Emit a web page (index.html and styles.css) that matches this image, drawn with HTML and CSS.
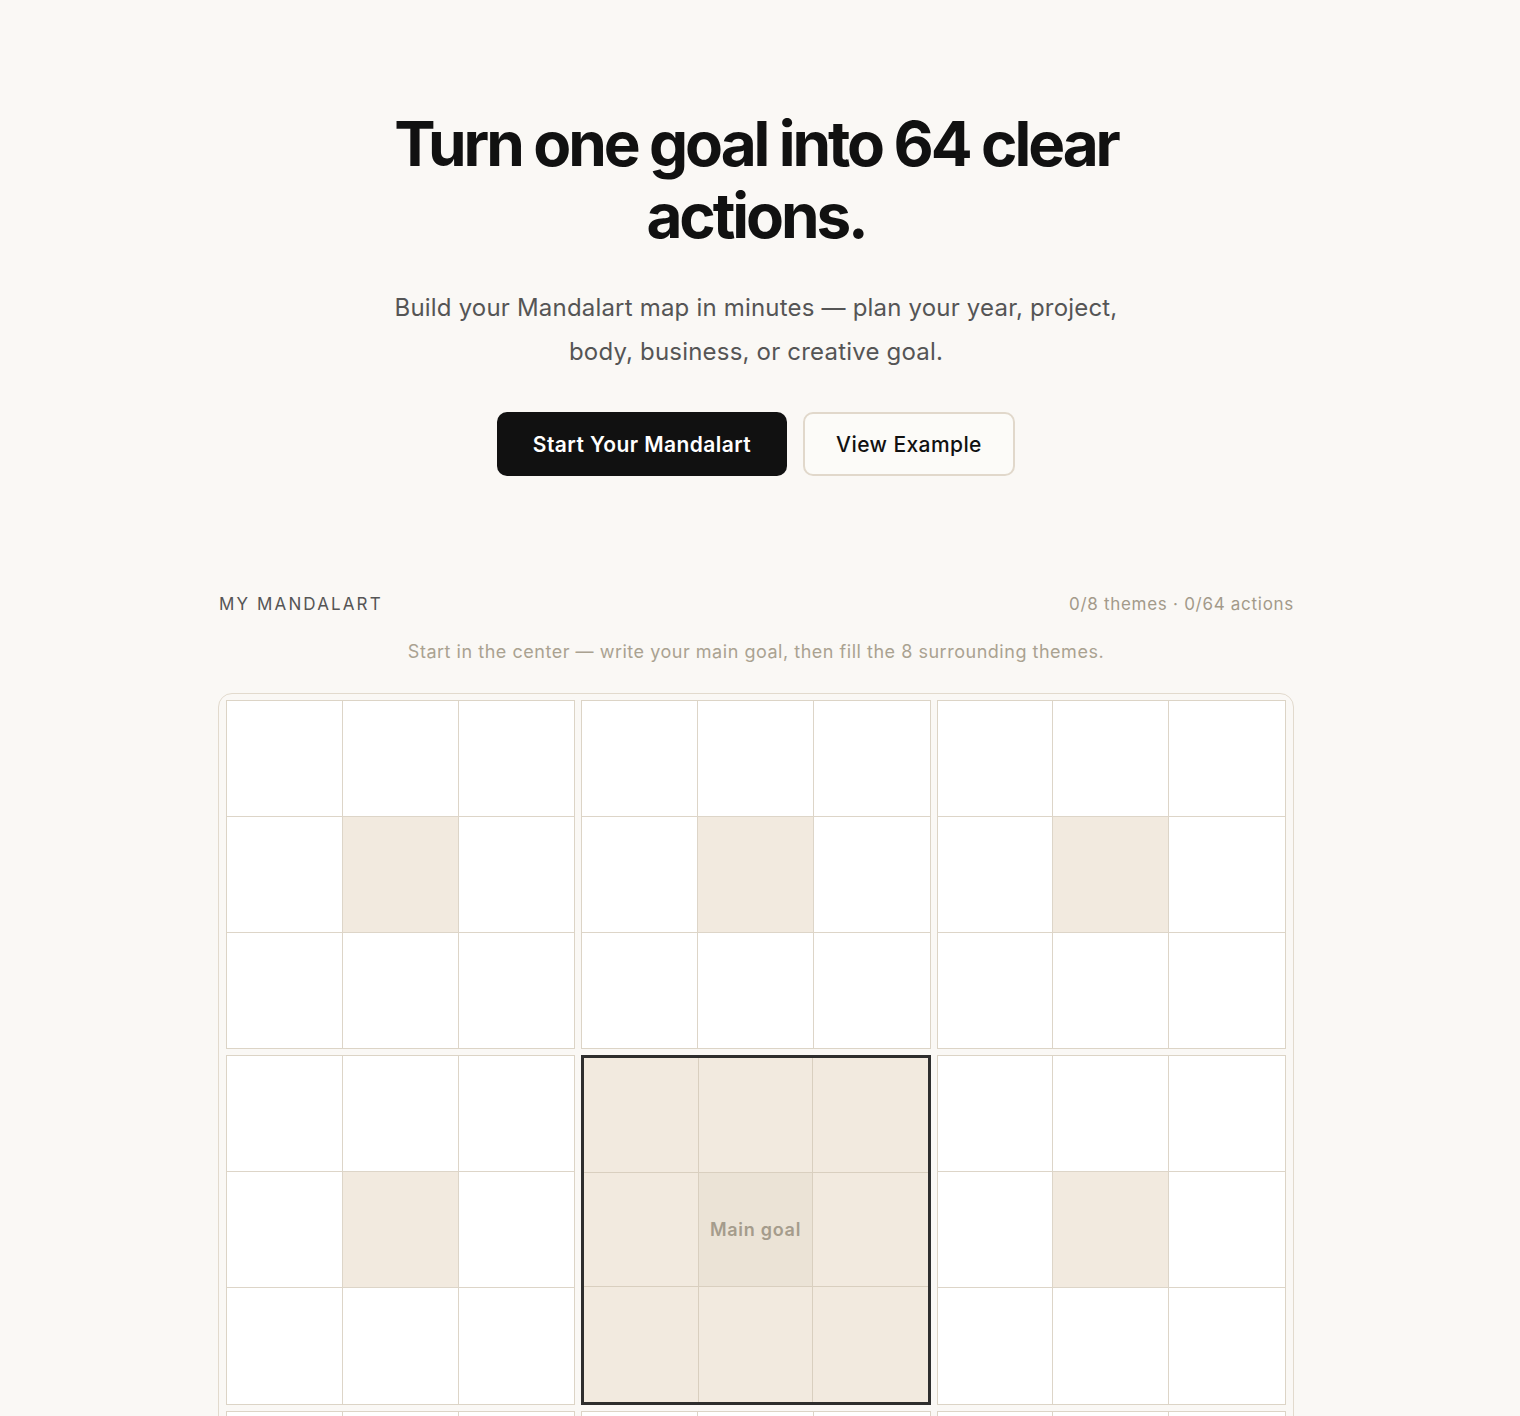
FILE: index.html
```html
<!DOCTYPE html>
<html lang="en">
<head>
<meta charset="utf-8">
<title>Mandalart</title>
<link rel="stylesheet" href="styles.css">
</head>
<body>
<main class="page">
  <section class="hero">
    <h1 class="title">Turn one goal into 64 clear actions.</h1>
    <p class="lead">Build your Mandalart map in minutes — plan your year, project, body, business, or creative goal.</p>
    <div class="actions">
      <a class="btn btn-primary" href="#">Start Your Mandalart</a>
      <a class="btn btn-secondary" href="#">View Example</a>
    </div>
  </section>
  <section class="mandalart">
    <div class="bar">
      <span class="label">MY MANDALART</span>
      <span class="stats">0/8 themes · 0/64 actions</span>
    </div>
    <p class="hint">Start in the center — write your main goal, then fill the 8 surrounding themes.</p>
    <div class="board">
      <div class="block">
        <div class="cell"></div><div class="cell"></div><div class="cell"></div>
        <div class="cell"></div><div class="cell cell-theme"></div><div class="cell"></div>
        <div class="cell"></div><div class="cell"></div><div class="cell"></div>
      </div>
      <div class="block">
        <div class="cell"></div><div class="cell"></div><div class="cell"></div>
        <div class="cell"></div><div class="cell cell-theme"></div><div class="cell"></div>
        <div class="cell"></div><div class="cell"></div><div class="cell"></div>
      </div>
      <div class="block">
        <div class="cell"></div><div class="cell"></div><div class="cell"></div>
        <div class="cell"></div><div class="cell cell-theme"></div><div class="cell"></div>
        <div class="cell"></div><div class="cell"></div><div class="cell"></div>
      </div>
      <div class="block">
        <div class="cell"></div><div class="cell"></div><div class="cell"></div>
        <div class="cell"></div><div class="cell cell-theme"></div><div class="cell"></div>
        <div class="cell"></div><div class="cell"></div><div class="cell"></div>
      </div>
      <div class="block block-center">
        <div class="cell cell-theme"></div><div class="cell cell-theme"></div><div class="cell cell-theme"></div>
        <div class="cell cell-theme"></div><div class="cell cell-goal">Main goal</div><div class="cell cell-theme"></div>
        <div class="cell cell-theme"></div><div class="cell cell-theme"></div><div class="cell cell-theme"></div>
      </div>
      <div class="block">
        <div class="cell"></div><div class="cell"></div><div class="cell"></div>
        <div class="cell"></div><div class="cell cell-theme"></div><div class="cell"></div>
        <div class="cell"></div><div class="cell"></div><div class="cell"></div>
      </div>
      <div class="block">
        <div class="cell"></div><div class="cell"></div><div class="cell"></div>
        <div class="cell"></div><div class="cell cell-theme"></div><div class="cell"></div>
        <div class="cell"></div><div class="cell"></div><div class="cell"></div>
      </div>
      <div class="block">
        <div class="cell"></div><div class="cell"></div><div class="cell"></div>
        <div class="cell"></div><div class="cell cell-theme"></div><div class="cell"></div>
        <div class="cell"></div><div class="cell"></div><div class="cell"></div>
      </div>
      <div class="block">
        <div class="cell"></div><div class="cell"></div><div class="cell"></div>
        <div class="cell"></div><div class="cell cell-theme"></div><div class="cell"></div>
        <div class="cell"></div><div class="cell"></div><div class="cell"></div>
      </div>
    </div>
  </section>
</main>
</body>
</html>
```

FILE: styles.css
```css
* { box-sizing: border-box; }

html, body {
  margin: 0;
  padding: 0;
  background: #faf8f5;
}

body {
  font-family: Inter, "Noto Sans", "Liberation Sans", sans-serif;
  color: #111111;
}

.page {
  width: 1512px;
  padding-top: 108px;
  padding-bottom: 40px;
}

.hero {
  display: flex;
  flex-direction: column;
  align-items: center;
  text-align: center;
}

.title {
  margin: 0;
  max-width: 780px;
  font-size: 62px;
  line-height: 72px;
  font-weight: 700;
  letter-spacing: -0.05em;
  color: #111111;
}

.lead {
  margin: 34px 0 0;
  max-width: 760px;
  font-size: 24px;
  line-height: 44px;
  font-weight: 400;
  letter-spacing: 0.008em;
  color: #555555;
}

.actions {
  margin-top: 38px;
  display: flex;
  gap: 16px;
}

.btn {
  display: inline-flex;
  align-items: center;
  justify-content: center;
  height: 64px;
  border-radius: 10px;
  font-size: 21px;
  text-decoration: none;
  letter-spacing: 0.02em;
}

.btn-primary {
  width: 290px;
  background: #111111;
  color: #ffffff;
  font-weight: 600;
}

.btn-secondary {
  width: 212px;
  background: #fcfbf8;
  color: #111111;
  font-weight: 500;
  border: 2px solid #e1d8cb;
}

.mandalart {
  width: 1076px;
  margin: 116px auto 0;
}

.bar {
  display: flex;
  justify-content: space-between;
  align-items: center;
  height: 24px;
  line-height: 24px;
}

.label {
  font-size: 17px;
  letter-spacing: 0.125em;
  color: #555555;
  padding-left: 1px;
}

.stats {
  font-size: 17px;
  letter-spacing: 0.042em;
  color: #a39a8a;
}

.hint {
  margin: 23px 0 0;
  text-align: center;
  font-size: 18px;
  line-height: 26px;
  letter-spacing: 0.029em;
  color: #aaa291;
}

.board {
  margin-top: 28px;
  border: 1px solid #e2dacd;
  border-radius: 14px;
  padding: 6px 7px;
  display: grid;
  grid-template-columns: repeat(3, 1fr);
  gap: 6px;
  background: #faf8f5;
}

.block {
  aspect-ratio: 1 / 1;
  display: grid;
  grid-template-columns: repeat(3, 1fr);
  grid-template-rows: repeat(3, 1fr);
  border: 1px solid #dcd4c6;
  background: #ffffff;
}

.cell {
  border-right: 1px solid #ddd5c8;
  border-bottom: 1px solid #ddd5c8;
  background: #ffffff;
}

.cell:nth-child(3n) { border-right: none; }
.cell:nth-child(n+7) { border-bottom: none; }

.cell-theme { background: #f2eadf; }

.block-center {
  border: 3px solid #2e2e2e;
  background: #f2eadf;
}

.block-center .cell {
  border-color: #d9cfbf;
}

.cell-goal {
  background: #ebe3d6;
  display: flex;
  align-items: center;
  justify-content: center;
  font-size: 18px;
  font-weight: 600;
  color: #a59c8c;
  letter-spacing: 0.04em;
}
```
